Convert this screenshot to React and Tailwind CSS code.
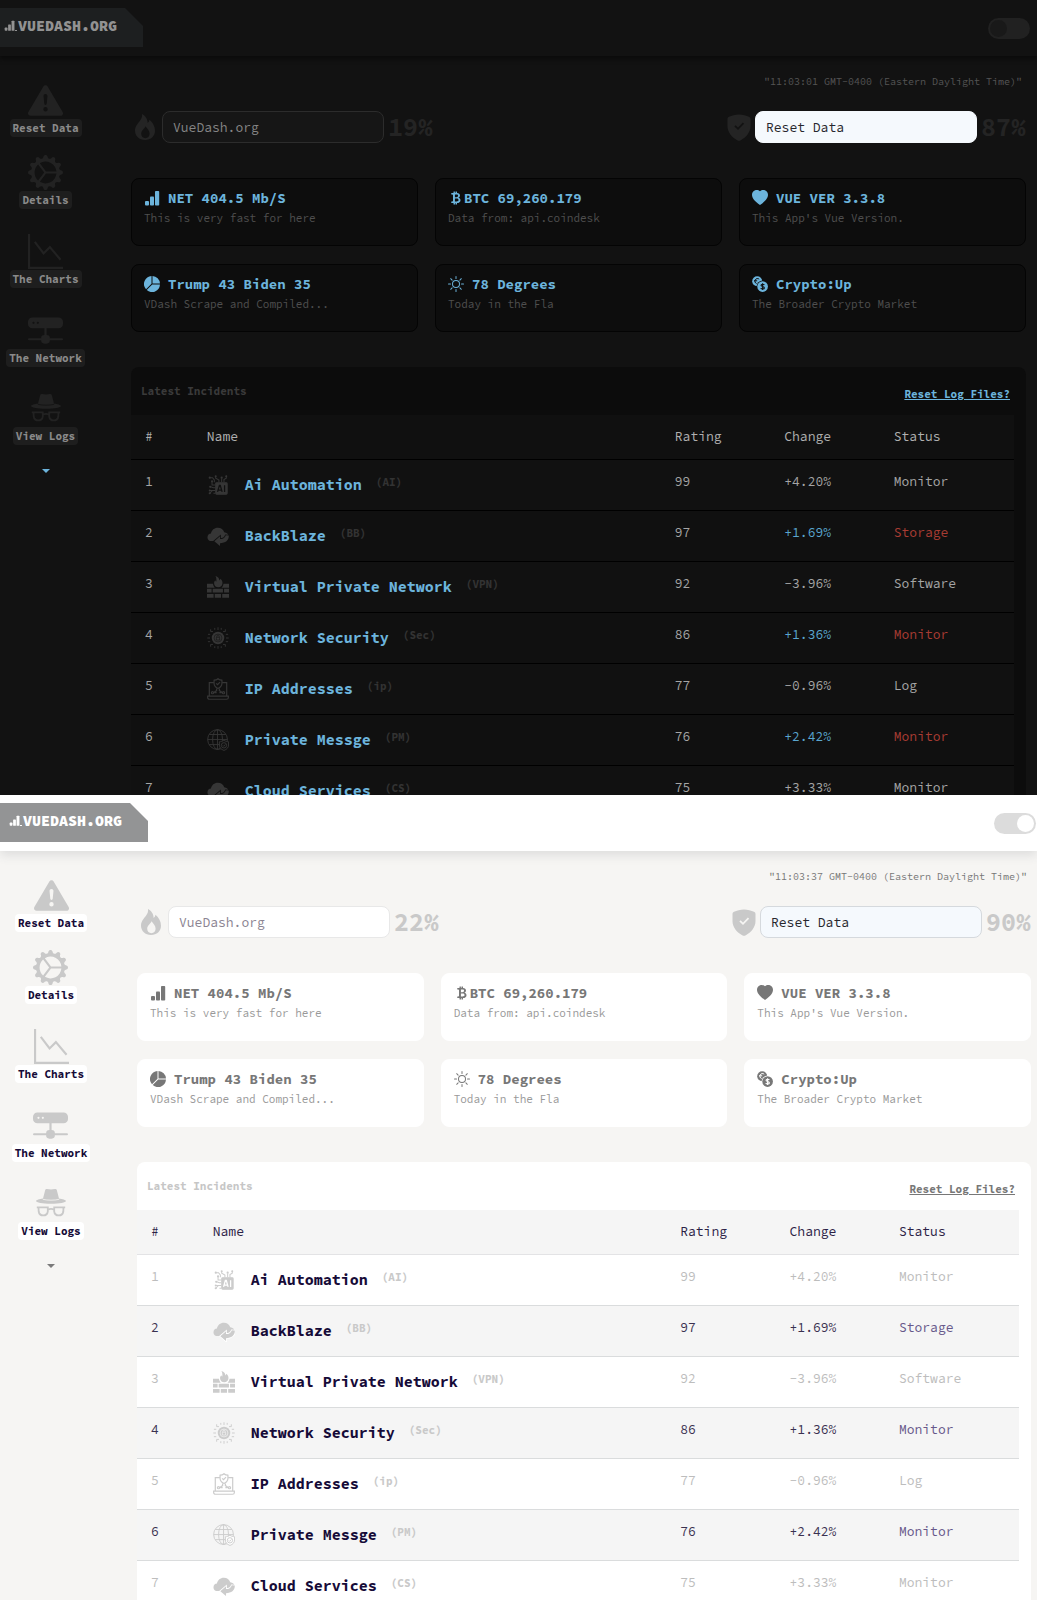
import React, { useState } from "react";
import {
  BsExclamationTriangleFill,
  BsGearWideConnected,
  BsHddNetworkFill,
  BsPieChartFill,
  BsHeartFill,
  BsSun,
  BsCurrencyBitcoin,
} from "react-icons/bs";

const themes = {
  dark: {
    page: "bg-[#121212]",
    aside: "w-[131px]",
    nav: "w-[91px]",
    main: "mr-[11px]",
    header: "bg-[#121212] pr-[7px] shadow-[0_3px_4px_#0b0b0b]",
    tab: "w-[143px] bg-[#1d1f20] pl-1 text-[#929292]",
    track: "bg-[#212121]",
    knob: "bg-[#191919]",
    time: "text-[#555555]",
    sideIcon: "text-[#222222]",
    sideLabel: "bg-[#1e1e1e] text-[#8a8a8a]",
    caret: "text-[#6cb4dc]",
    toolIcon: "text-[#242424]",
    check: "#121212",
    search: "border-[#2c2c2c] bg-[#161616] text-[#858585]",
    reset: "border-[#f4f8fc] bg-[#f5f9fd] text-[#26262c]",
    card: "border-[#040404] bg-[#0d0d0d]",
    title: "text-[#6cb4dc]",
    sub: "text-[#4f4f4f]",
    panel: "bg-[#0c0c0c]",
    latest: "text-[#3a3a3a]",
    link: "text-[#6cb4dc]",
    head: "bg-[#101010] text-[#b0b0b0] border-black",
    row: "bg-[#111111] border-black text-[#a5a5a5]",
    rowAlt: "bg-[#101010] border-black text-[#a5a5a5]",
    name: "text-[#6cb4dc]",
    code: "text-[#333333]",
    icon: "text-[#363636]",
    iconHole: "#111111",
    changeAlt: "text-[#5aa6cf]",
    statusAlt: "text-[#a83c33]",
  },
  light: {
    page: "bg-[#f6f5f3]",
    aside: "w-[137px]",
    nav: "w-[102px]",
    main: "mr-[6px]",
    header: "bg-white pr-px shadow-[0_4px_10px_#dcdcdc]",
    tab: "w-[148px] bg-[#939495] pl-[9px] text-white",
    track: "bg-[#dcdcdc]",
    knob: "bg-white",
    time: "text-[#777777]",
    sideIcon: "text-[#c9c9c9]",
    sideLabel: "bg-white text-[#160b38]",
    caret: "text-[#7a7a7a]",
    toolIcon: "text-[#c9c9c9]",
    check: "#f6f5f3",
    search: "border-[#e8e8e8] bg-white text-[#8b8492]",
    reset: "border-[#d5d9dd] bg-[#f5f9fd] text-[#26262c]",
    card: "border-white bg-white",
    title: "text-[#777777]",
    sub: "text-[#999999]",
    panel: "bg-white",
    latest: "text-[#c6c6c6]",
    link: "text-[#777777]",
    head: "bg-[#f5f5f5] text-[#2b2145] border-[#e3e3e5]",
    row: "bg-white border-[#dadcdd] text-[#bdbdbd]",
    rowAlt: "bg-[#f5f5f5] border-[#dadcdd] text-[#3a3150]",
    name: "text-[#160b38]",
    code: "text-[#c9c9c9]",
    icon: "text-[#cccccc]",
    iconHole: "#ffffff",
    changeAlt: "text-[#3a3150]",
    statusAlt: "text-[#67588a]",
  },
};

const Bars = ({ size = 16 }) => (
  <svg viewBox="0 0 16 16" width={size} height={size} fill="currentColor">
    <rect x="1" y="11" width="4" height="4.6" rx="1" />
    <rect x="6" y="6.5" width="4" height="9.1" rx="0.8" />
    <rect x="11" y="1" width="4.2" height="14.6" rx="0.8" />
  </svg>
);

const Coins = () => (
  <svg viewBox="0 0 16 16" width="16" height="16" fill="none">
    <circle cx="5.2" cy="5.2" r="5" fill="currentColor" />
    <path d="M7.2 3.2a2.6 2.6 0 1 0-2.6 4.4M2 4.8h3.2" stroke="var(--hole)" strokeWidth="1" />
    <circle cx="10.6" cy="10.6" r="6" fill="var(--hole)" />
    <circle cx="10.6" cy="10.6" r="5.3" fill="currentColor" />
    <path d="M12.4 8.9c-.5-.7-3.3-1-3.4.4 0 1.5 3.4 1 3.4 2.6 0 1.4-3 1.2-3.7.3M10.6 7.3v6.6" stroke="var(--hole)" strokeWidth="1.1" />
  </svg>
);

const Flame = () => (
  <svg viewBox="0 0 20 26" width="20" height="26" fill="currentColor" fillRule="evenodd">
    <path d="M7 0c3.2 1.700 5.800 5 5.600 9 1-.7 1.600-1.700 1.900-3.200C17.800 8.500 20 12.500 20 16.700 20 22 15.800 26 10 26S0 22 0 16.500C0 12.300 2.600 9.800 4.800 7 6.500 4.800 7.400 2.800 7 0Zm3.500 12.300c-.8 2.500-4.300 4-4.300 7.500 0 2.500 1.800 4.400 4.200 4.400s4.200-1.900 4.200-4.400c0-3-2.300-5.300-4.100-7.500Z" />
  </svg>
);

const Shield = ({ check }) => (
  <svg viewBox="0 0 24 27" width="24" height="27" fill="none">
    <path d="M12 .5C15.5.5 19.500 1.500 22 2.800c1.200.6 1.500 1.400 1.500 2.700v6.700c0 6-4.500 11.200-9.700 14-1.200.7-2.400.7-3.600 0C5 23.400.5 18.200.5 12.200V5.500c0-1.300.3-2.100 1.500-2.700C4.500 1.500 8.500.5 12 .5Z" fill="currentColor" />
    <path d="m8 11.800 3 3 5.500-5.600" stroke={check} strokeWidth="1.800" />
  </svg>
);

const GraphDown = () => (
  <svg viewBox="0 0 36 36" width="35" height="35" fill="none" stroke="currentColor" strokeWidth="2.200">
    <path d="M1.100 0v34.900H36" />
    <path d="m7 8 9 12 6.500-6.500L33.500 26.500" />
  </svg>
);

const Incognito = () => (
  <svg viewBox="0 0 30 29" width="30" height="29" fill="none">
    <path d="M9.300.8C9.600.1 10.200 0 11 .1c2.700.5 5.300.5 8 0 .8-.1 1.400 0 1.700.7L23 9.500c3.500.5 7 1.500 7 2.600 0 1.500-6.500 2.700-15 2.700S0 13.600 0 12.100C0 11 3.500 10 7 9.500Z" fill="currentColor" />
    <path d="M6.800 10.300c5 1.200 11.400 1.200 16.400 0" stroke="var(--page)" strokeWidth=".8" />
    <path d="M2.500 18.300h9.300v4.200a4.600 4.600 0 0 1-9.100 0ZM18.200 18.300h9.300l-.2 4.200a4.600 4.600 0 0 1-9.100 0ZM.8 18.300h3M26.200 18.300h3M11.800 20.800c2-1.200 4.400-1.200 6.400 0" stroke="currentColor" strokeWidth="1.800" />
  </svg>
);

const AiIcon = () => (
  <svg viewBox="0 0 24 24" width="22" height="22" fill="none" stroke="currentColor" strokeWidth="1.100">
    <rect x="9.500" y="9.500" width="12.500" height="12.500" rx="1" fill="currentColor" />
    <path d="m11.500 19.500 2-7h1l2 7M12.200 17.500h3.600M19.200 12.300v7.400" stroke="var(--hole)" strokeWidth="1.400" />
    <path d="M13 9V6.500L9.500 4.500V2.500M16 9V5M18.500 9V6l2.500-1.500V2M9 12H5.500V7.500M9 15H7L4 14M9 18H6l-3 3M9 21H7M3 4h3l2 2.500V9M3 18h3" />
    <g fill="currentColor" stroke="none">
      <circle cx="3" cy="4" r="1.200" /><circle cx="9.500" cy="2.500" r="1.100" /><circle cx="16" cy="4" r="1.200" /><circle cx="21" cy="2.500" r="1.100" /><circle cx="5.500" cy="8" r="1.200" /><circle cx="3.500" cy="14" r="1.200" /><circle cx="3" cy="18" r="1.100" /><circle cx="3" cy="21" r="1.200" />
    </g>
  </svg>
);

const CloudIcon = () => (
  <svg viewBox="0 0 24 24" width="22" height="22" fill="currentColor">
    <path d="M5 17.500C2.500 17.500.5 16 .5 13.500S2.300 9.600 4.300 9.400C5 5.500 8 3 11.800 3c3.500 0 6.200 2 7 5 2.700.3 4.700 2 4.700 4.600 0 2.900-2.200 4.900-5 4.900Z" />
    <path d="m8 17.600 6.200-5.200v3c3.300 0 5.300-1.200 6.300-4.200l3.300.3c.2 5.300-3.800 8.300-9.600 8.300v3.200Z" stroke="var(--hole)" strokeWidth="1.800" paintOrder="stroke" />
  </svg>
);

const FirewallIcon = () => (
  <svg viewBox="0 0 24 24" width="22" height="22" fill="currentColor">
    <path d="M9.200 0c3 .8 4.200 2.600 4.400 4.800.6-.4.800-1 .8-1.700 2 1.500 2.900 3.500 2.400 5.600-.4 2.100-2 3.600-4.400 3.600-2.800 0-4.700-2-4.700-4.500 0-1.500.6-2.400 1.300-3.300.3 1 .7 1.400 1.200 1.600C10.400 4 10.300 1.700 9.200 0Z" />
    <path d="M0 8.500h6.500c.2 1.600.8 3 2 4.200H0ZM18 8.500h6v4.200h-8.200c1.200-.8 2-2.200 2.200-4.200ZM0 14h5v4H0ZM6.200 14h11.200v4H6.200ZM18.600 14H24v4h-5.400ZM0 19.500h7.200v4.200H0ZM8.500 19.500h6.800v4.200H8.500ZM16.600 19.500H24v4.200h-7.400Z" />
  </svg>
);

const SecurityIcon = () => (
  <svg viewBox="0 0 24 24" width="22" height="22" fill="none" stroke="currentColor">
    <circle cx="12" cy="12" r="6.800" fill="currentColor" stroke="none" />
    <circle cx="12" cy="12" r="4.300" stroke="var(--hole)" strokeWidth=".6" />
    <path d="M10.200 11.200h3.600v3h-3.600ZM10.800 11v-1a1.200 1.200 0 0 1 2.400 0v1" stroke="var(--hole)" strokeWidth=".6" />
    <path d="M12 .3v3M12 20.700v3M.3 12h3M20.700 12h3M4 2.500v2.500h2.500M20 2.500v2.500h-2.500M4 21.500V19h2.500M20 21.500V19h-2.500M1 8h2.500M20.500 8H23M1 16h2.500M20.500 16H23M8.500 1v2M15.500 1v2M8.500 21v2M15.500 21v2" strokeWidth="1" />
  </svg>
);

const LaptopIcon = () => (
  <svg viewBox="0 0 24 24" width="22" height="22" fill="none" stroke="currentColor" strokeWidth="1.300">
    <path d="M7.500 5H2.500v14.500M16.500 5h5v14.500M.7 19.800h22.600v1.400c0 1.200-.8 2-2 2H2.700c-1.200 0-2-.8-2-2Z" />
    <path d="M12 .8c1.400 1.200 2.700 1.500 4.300 1.600v3.300c0 2.700-1.600 4.500-4.300 5.800-2.700-1.300-4.300-3.100-4.300-5.800V2.400C9.300 2.300 10.600 2 12 .8Z" />
    <path d="m10 5.800 1.500 1.500L14.200 4.500M10.500 11.500v2.200l-3 2M13.500 11.500v2.200l3 2M8 16h2.500M13.500 16H16" />
    <circle cx="6" cy="16" r="1.200" /><circle cx="18" cy="16" r="1.200" />
  </svg>
);

const GlobeIcon = () => (
  <svg viewBox="0 0 24 24" width="22" height="22" fill="none" stroke="currentColor" strokeWidth="1">
    <circle cx="11.500" cy="11.500" r="10.800" />
    <ellipse cx="11.500" cy="11.500" rx="5.400" ry="10.800" />
    <path d="M11.500.7v21.600M.7 11.500h21.600M2.500 6h18M2.500 17h18" />
    <path d="M18.500 12.300c1.600 1.100 3.100 1.500 5 1.600v3.600c0 2.800-1.800 4.700-5 5.900-3.200-1.200-5-3.100-5-5.900v-3.600c1.900-.1 3.400-.5 5-1.600Z" fill="var(--hole)" />
    <circle cx="18.500" cy="17.800" r="2.900" />
    <path d="m17.200 17.900 1 1 1.800-2" />
  </svg>
);

const navItems = [
  { label: "Reset Data", Icon: BsExclamationTriangleFill, gap: "mb-[17px]" },
  { label: "Details", Icon: BsGearWideConnected, gap: "mb-6" },
  { label: "The Charts", Icon: GraphDown, gap: "mb-6" },
  { label: "The Network", Icon: BsHddNetworkFill, gap: "mb-[23px]" },
  { label: "View Logs", Icon: Incognito, gap: "mb-6" },
];

const cards = [
  { title: "NET 404.5 Mb/S", sub: "This is very fast for here", Icon: Bars, gap: "gap-2" },
  { title: "BTC 69,260.179", sub: "Data from: api.coindesk", Icon: BsCurrencyBitcoin, gap: "gap-0" },
  { title: "VUE VER 3.3.8", sub: "This App's Vue Version.", Icon: BsHeartFill, gap: "gap-2" },
  { title: "Trump 43 Biden 35", sub: "VDash Scrape and Compiled...", Icon: BsPieChartFill, gap: "gap-2" },
  { title: "78 Degrees", sub: "Today in the Fla", Icon: BsSun, gap: "gap-2" },
  { title: "Crypto:Up", sub: "The Broader Crypto Market", Icon: Coins, gap: "gap-2" },
];

const rows = [
  ["1", AiIcon, "Ai Automation", "(AI)", "99", "+4.20%", "Monitor"],
  ["2", CloudIcon, "BackBlaze", "(BB)", "97", "+1.69%", "Storage"],
  ["3", FirewallIcon, "Virtual Private Network", "(VPN)", "92", "-3.96%", "Software"],
  ["4", SecurityIcon, "Network Security", "(Sec)", "86", "+1.36%", "Monitor"],
  ["5", LaptopIcon, "IP Addresses", "(ip)", "77", "-0.96%", "Log"],
  ["6", GlobeIcon, "Private Messge", "(PM)", "76", "+2.42%", "Monitor"],
  ["7", CloudIcon, "Cloud Services", "(CS)", "75", "+3.33%", "Monitor"],
];

function Header({ t, light }) {
  const [on, setOn] = useState(light);
  return (
    <header className={"relative flex h-14 items-start justify-between " + t.header}>
      <a
        href="#home"
        className={"mt-2 flex h-[39px] items-start pt-[9px] text-[15px] leading-[18px] font-black [clip-path:polygon(0_0,calc(100%_-_18px)_0,100%_18px,100%_100%,0_100%)] " + t.tab}
      >
        <span className="mt-[3px] flex w-[14px] items-end">
          <Bars size={11} />
          <span className="h-px w-[2px] bg-current" />
        </span>
        VUEDASH.ORG
      </a>
      <label className="relative mt-[18px] block h-[21px] w-[42px] cursor-pointer">
        <input type="checkbox" role="switch" aria-label="Light theme" checked={on} onChange={(e) => setOn(e.target.checked)} className="peer sr-only" />
        <span className={"flex h-full items-center rounded-full px-[2px] " + t.track + (on ? " justify-end" : " justify-start")}>
          <span className={"size-[17px] rounded-full " + t.knob} />
        </span>
      </label>
    </header>
  );
}

function Sidebar({ t }) {
  return (
    <aside className={"shrink-0 " + t.aside}>
      <nav className={"flex flex-col items-center pt-[26px] " + t.nav}>
        {navItems.map(({ label, Icon, gap }) => (
          <a key={label} href="#section" className={"flex flex-col items-center " + gap}>
            <span className={"flex h-[37px] items-center " + t.sideIcon}>
              <Icon size={35} />
            </span>
            <span className={"rounded px-[3px] text-[11px] leading-[18px] font-bold whitespace-nowrap " + t.sideLabel}>{label}</span>
          </a>
        ))}
        <button type="button" aria-label="More" className={t.caret}>
          <svg viewBox="0 0 8 4" width="8" height="4" fill="currentColor">
            <path d="M0 0h8L4 4Z" />
          </svg>
        </button>
      </nav>
    </aside>
  );
}

function Toolbar({ t, left, right, id }) {
  const field = "h-8 w-[222px] rounded-lg border px-[10px] text-[13px] outline-none ";
  return (
    <div className="mt-[21px] flex items-center justify-between">
      <div className={"flex items-center pl-1 " + t.toolIcon}>
        <Flame />
        <input aria-label="Site" id={"site-" + id} defaultValue="VueDash.org" className={"ml-[7px] " + field + t.search} />
        <span className="ml-1 text-[25px] leading-8 font-bold">{left}</span>
      </div>
      <div className={"flex items-center " + t.toolIcon}>
        <Shield check={t.check} />
        <input aria-label="Action" id={"action-" + id} defaultValue="Reset Data" className={"ml-1 " + field + t.reset} />
        <span className="ml-1 text-[25px] leading-8 font-bold">{right}</span>
      </div>
    </div>
  );
}

function Dashboard({ mode, time, left, right, className }) {
  const t = themes[mode];
  return (
    <section className={"overflow-hidden " + t.page + " " + className} style={{ "--hole": t.iconHole, "--page": t.check }}>
      <Header t={t} light={mode === "light"} />
      <div className="flex">
        <Sidebar t={t} />
        <main className={"min-w-0 flex-1 " + t.main}>
          <p className={"pt-[18px] pr-1 text-right text-[10px] leading-4 " + t.time}>{time}</p>
          <Toolbar t={t} left={left} right={right} id={mode} />
          <div className="mt-[35px] grid grid-cols-3 gap-x-[17px] gap-y-[18px]">
            {cards.map(({ title, sub, Icon, gap }) => (
              <article key={title} className={"h-[68px] rounded-lg border px-3 pt-[10px] " + t.card}>
                <h2 className={"flex items-center text-[14px] leading-[18px] font-bold whitespace-nowrap " + gap + " " + t.title}>
                  <Icon size={16} />
                  {title}
                </h2>
                <p className={"mt-[2px] text-[11px] leading-[18px] whitespace-nowrap " + t.sub}>{sub}</p>
              </article>
            ))}
          </div>
          <div className={"mt-[35px] rounded-t-lg pr-3 " + t.panel}>
            <div className="flex h-12 justify-between pt-[15px] pr-1 pl-[10px] text-[11px] leading-[18px] font-bold">
              <h3 className={t.latest}>Latest Incidents</h3>
              <a href="#reset" className={"mt-[3px] underline " + t.link}>Reset Log Files?</a>
            </div>
            <table className="w-full table-fixed border-collapse text-left text-[13px] leading-[18px]">
              <colgroup>
                <col className="w-[7%]" />
                <col className="w-[53%]" />
                <col className="w-[12.4%]" />
                <col className="w-[12.4%]" />
                <col />
              </colgroup>
              <thead>
                <tr className={"h-11 border-b " + t.head}>
                  {["#", "Name", "Rating", "Change", "Status"].map((h) => (
                    <th key={h} scope="col" className="px-[14px] font-normal">{h}</th>
                  ))}
                </tr>
              </thead>
              <tbody>
                {rows.map(([n, Icon, name, code, rating, change, status], i) => {
                  const alt = i % 2 === 1;
                  return (
                    <tr key={n} className={"h-[51px] border-b align-top " + (alt ? t.rowAlt : t.row)}>
                      <td className="px-[14px] pt-[13px]">{n}</td>
                      <td className="px-[14px] pt-[13px]">
                        <div className="flex items-start whitespace-nowrap">
                          <span className={"mt-px " + t.icon}><Icon /></span>
                          <a href="#incident" className={"mt-[3px] ml-4 text-[15px] font-bold " + t.name}>{name}</a>
                          <span className={"ml-[14px] text-[11px] font-bold " + t.code}>{code}</span>
                        </div>
                      </td>
                      <td className="px-[14px] pt-[13px]">{rating}</td>
                      <td className={"px-[14px] pt-[13px] " + (alt ? t.changeAlt : "")}>{change}</td>
                      <td className={"px-[14px] pt-[13px] " + (alt ? t.statusAlt : "")}>{status}</td>
                    </tr>
                  );
                })}
              </tbody>
            </table>
          </div>
        </main>
      </div>
    </section>
  );
}

export default function App() {
  return (
    <div className="flex h-screen flex-col overflow-hidden font-['Source_Code_Pro','Liberation_Mono',monospace]">
      <Dashboard mode="dark" time={'"11:03:01 GMT-0400 (Eastern Daylight Time)"'} left="19%" right="87%" className="h-[795px] shrink-0" />
      <Dashboard mode="light" time={'"11:03:37 GMT-0400 (Eastern Daylight Time)"'} left="22%" right="90%" className="min-h-0 flex-1" />
    </div>
  );
}
